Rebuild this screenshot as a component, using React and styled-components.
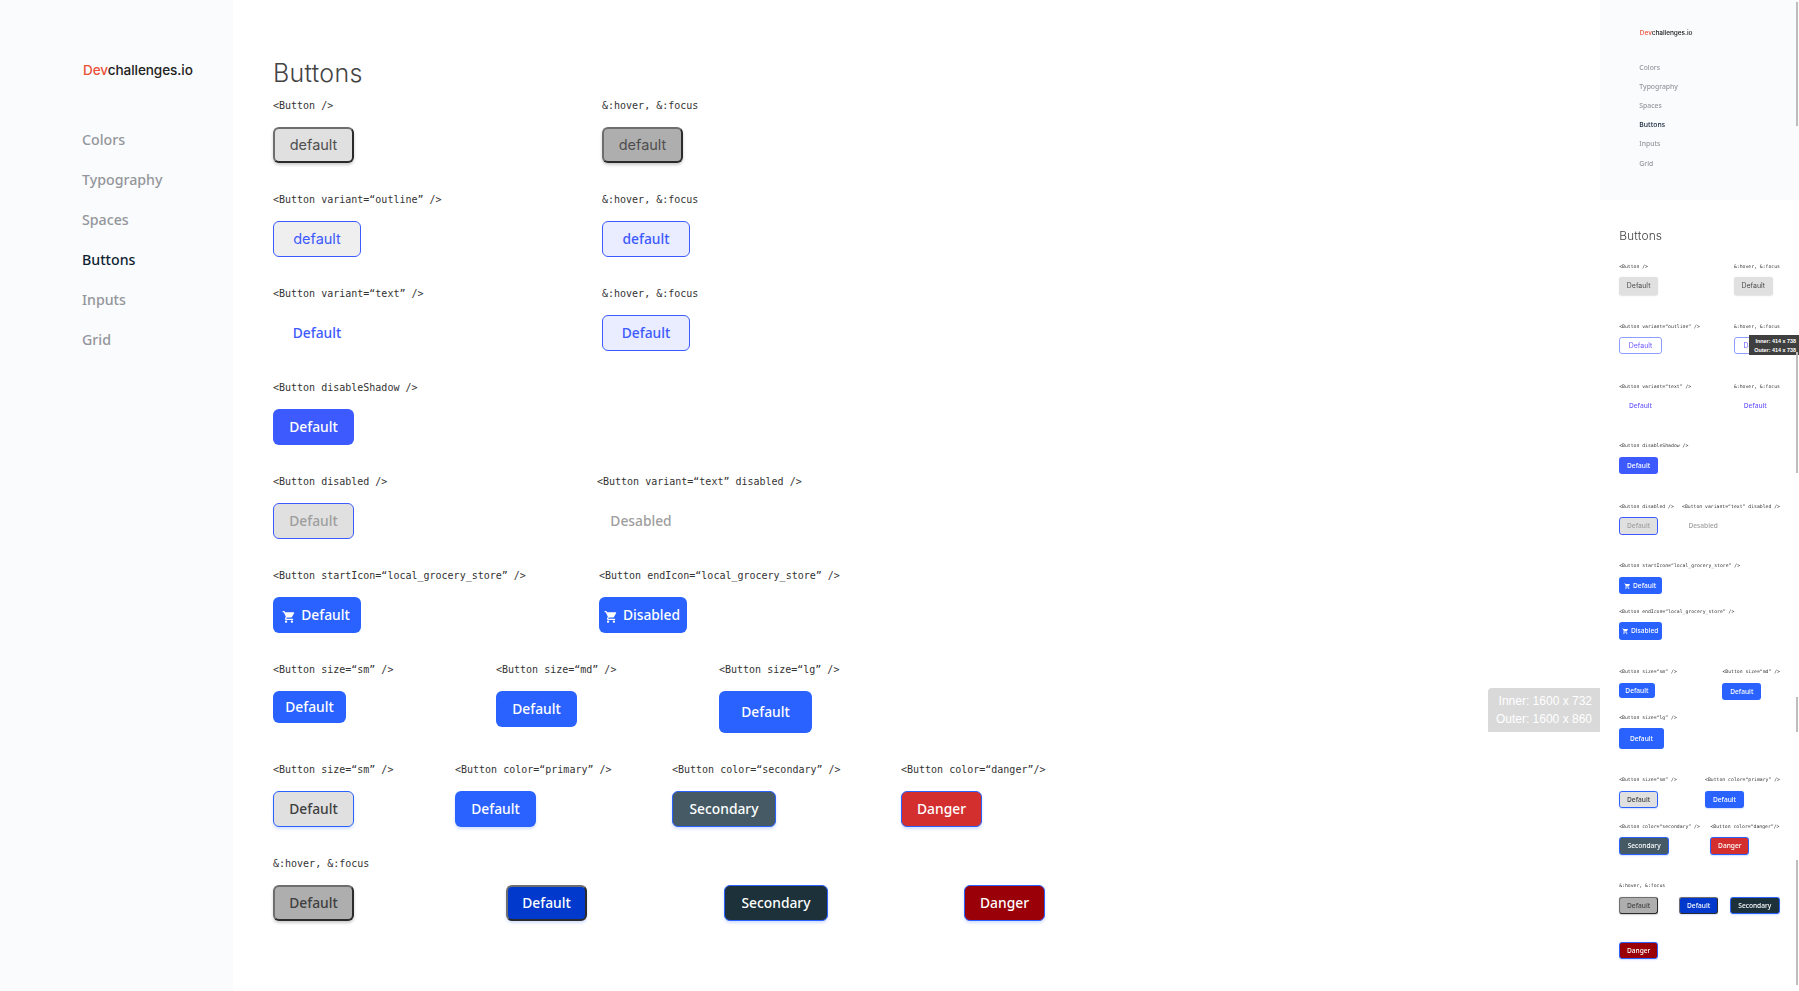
import React from "react";
import styled, { createGlobalStyle, css } from "styled-components";

const Global = createGlobalStyle`
  html, body { margin: 0; padding: 0; background: #fff; height: 100%; overflow: hidden; }
  #root { height: 100%; }
`;

const DISPLAY = `Inter, "Open Sans", sans-serif`;
const BODY = `"Noto Sans", "Open Sans", sans-serif`;
const MONO = `"DejaVu Sans Mono", "Liberation Mono", monospace`;

const Page = styled.div`
  display: flex;
  height: 991px;
  width: 1799px;
`;
const Side = styled.aside`
  flex: none;
  width: ${(p) => p.$w};
  height: ${(p) => p.$h};
  background: #fafbfd;
  box-sizing: border-box;
  padding: 60px 0 0 82px;
`;
const Logo = styled.div`
  font: 500 13.6px/20px ${DISPLAY};
  color: #222;
  letter-spacing: -0.1px;
  margin-left: 1px;
  margin-bottom: 40px;
  span { color: #eb5038; }
`;
const NavItem = styled.div`
  font: 500 14.2px/40px ${BODY};
  color: ${(p) => (p.$active ? "#0f1f33" : "#94969b")};
`;
const Main = styled.main`
  flex: 1;
  padding-left: 40px;
`;
const Heading = styled.h1`
  margin: 0;
  padding-top: 55px;
  margin-bottom: ${(p) => p.$mb}px;
  font: 300 25px/36px ${DISPLAY};
  letter-spacing: 0.3px;
  color: #444;
`;
const Row = styled.div`
  display: flex;
  margin-bottom: ${(p) => p.$mb}px;
`;
const Cell = styled.div`
  flex: none;
  width: ${(p) => p.$w}px;
  display: flex;
  flex-direction: column;
  align-items: flex-start;
  gap: 14px;
`;
const Label = styled.code`
  display: block;
  height: 16px;
  font: 400 10px/18px ${MONO};
  color: #333;
  white-space: pre;
`;

const OUTSET = css`border: 2px solid; border-color: #6e6e6e #2b2b2b #2b2b2b #6e6e6e;`;
const BLUE_EDGE = css`border: 1px solid #2962ff; box-shadow: 0 2px 3px rgba(41,98,255,.2);`;
const THIN = css`font: 400 14.5px/20px ${DISPLAY};`;

const looks = {
  plain: css`background: #e0e0e0; color: #4f4f4f; ${OUTSET} box-shadow: 0 2px 3px rgba(51,51,51,.25); ${THIN}`,
  plainHover: css`background: #aeaeae; color: #4f4f4f; ${OUTSET} box-shadow: 0 2px 3px rgba(51,51,51,.25); ${THIN}`,
  outline: css`background: #efefef; color: #3d5afe; border: 1px solid #3d5afe; ${THIN}`,
  outlineHover: css`background: #e9edff; color: #3d5afe; border: 1px solid #3d5afe;`,
  text: css`background: transparent; color: #3d5afe;`,
  flat: css`background: #3d5afe; color: #fff;`,
  disabled: css`background: #e0e0e0; color: #9e9e9e; border: 1px solid #3d5afe;`,
  textDisabled: css`background: transparent; color: #9e9e9e;`,
  blue: css`background: #2962ff; color: #fff;`,
  grey: css`background: #e0e0e0; color: #3f3f3f; ${BLUE_EDGE}`,
  primary: css`background: #2962ff; color: #fff; box-shadow: 0 2px 3px rgba(41,98,255,.2);`,
  secondary: css`background: #455a64; color: #fff; ${BLUE_EDGE}`,
  danger: css`background: #d32f2f; color: #fff; ${BLUE_EDGE}`,
  greyHover: css`background: #aeaeae; color: #3f3f3f; ${OUTSET} box-shadow: 0 2px 3px rgba(51,51,51,.25);`,
  primaryHover: css`background: #0039cb; color: #fff; ${OUTSET} box-shadow: 0 2px 3px rgba(41,98,255,.2);`,
  secondaryHover: css`background: #1c313a; color: #fff; ${BLUE_EDGE}`,
  dangerHover: css`background: #9a0007; color: #fff; ${BLUE_EDGE}`,
  miniPlain: css`background: #e0e0e0; color: #4f4f4f; box-shadow: 0 2px 3px rgba(51,51,51,.15); ${THIN}`,
  miniOutline: css`background: #fff; color: #6d5cff; border: 2px solid #8c9eff; ${THIN}`,
  miniText: css`background: transparent; color: #6d5cff;`,
};

const Btn = styled.button`
  flex: none;
  box-sizing: border-box;
  width: ${(p) => p.$w ?? 81}px;
  height: ${(p) => p.$h ?? 36}px;
  display: inline-flex;
  align-items: center;
  justify-content: center;
  gap: 5px;
  padding: 0;
  border: 0;
  border-radius: 6px;
  font: 500 13.8px/20px ${BODY};
  ${(p) => looks[p.$look]}
`;
const Cart = styled.svg`
  width: 14px;
  height: 14px;
  fill: currentColor;
  margin-top: 3px;
  margin-left: -2px;
`;
const CartIcon = () => (
  <Cart viewBox="0 0 24 24" aria-hidden="true">
    <path d="M7 18c-1.1 0-1.99.9-1.99 2S5.9 22 7 22s2-.9 2-2-.9-2-2-2zM1 2v2h2l3.6 7.59-1.35 2.45c-.16.28-.25.61-.25.96 0 1.1.9 2 2 2h12v-2H7.42c-.14 0-.25-.11-.25-.25l.03-.12.9-1.83h7.45c.75 0 1.41-.41 1.75-1.03l3.58-6.49c.08-.14.12-.31.12-.48 0-.55-.45-1-1-1H5.21l-.94-2H1zm16 16c-1.1 0-1.99.9-1.99 2s.89 2 1.99 2 2-.9 2-2-.9-2-2-2z" />
  </Cart>
);

const Preview = styled.div`
  flex: none;
  width: 199px;
  position: relative;
`;
const PreviewClip = styled.div`
  height: 991px;
  overflow: hidden;
  filter: blur(0.5px);
`;
const PreviewPage = styled.div`
  zoom: 0.48;
  width: 414px;
`;
const PreviewMain = styled.div`
  padding-left: 40px;
`;
const SizeNote = styled.div`
  position: absolute;
  right: 100%;
  top: 688px;
  width: 112px;
  height: 44px;
  box-sizing: border-box;
  padding: 4px 8px 0 0;
  background: #d9d9d9;
  border-top-left-radius: 4px;
  color: #fff;
  font: 400 12px/18px "Liberation Sans", Arial, sans-serif;
  text-align: right;
  white-space: nowrap;
`;
const MiniNote = styled.div`
  position: absolute;
  right: 0;
  top: 335px;
  width: 50px;
  height: 20px;
  background: #3f3f3f;
  color: #fff;
  font: 700 5.4px/8.5px "Liberation Sans", Arial, sans-serif;
  text-align: right;
  padding: 2px 3px 0 0;
  box-sizing: border-box;
  white-space: nowrap;
`;
const Thumb = styled.div`
  position: absolute;
  left: 196px;
  top: ${(p) => p.$top}px;
  width: 2px;
  height: ${(p) => p.$len}px;
  background: #bdbdbd;
`;

const NAV = ["Colors", "Typography", "Spaces", "Buttons", "Inputs", "Grid"];
const Sidebar = ({ w, h }) => (
  <Side $w={w} $h={h}>
    <Logo><span>Dev</span>challenges.io</Logo>
    {NAV.map((n) => <NavItem key={n} $active={n === "Buttons"}>{n}</NavItem>)}
  </Side>
);

const CODE = {
  base: "<Button />",
  hov: "&:hover, &:focus",
  outline: "<Button variant=“outline” />",
  text: "<Button variant=“text” />",
  shadow: "<Button disableShadow />",
  dis: "<Button disabled />",
  textDis: "<Button variant=“text” disabled />",
  start: "<Button startIcon=“local_grocery_store” />",
  end: "<Button endIcon=“local_grocery_store” />",
  sm: "<Button size=“sm” />",
  md: "<Button size=“md” />",
  lg: "<Button size=“lg” />",
  pri: "<Button color=“primary” />",
  sec: "<Button color=“secondary” />",
  dan: "<Button color=“danger”/>",
};

const Rows = ({ rows }) =>
  rows.map((r, i) => (
    <Row key={i} $mb={r.mb}>
      {r.cells.map((c, j) => (
        <Cell key={j} $w={c.cw}>
          <Label>{c.code}</Label>
          <Btn $look={c.look} $w={c.w} $h={c.h}>
            {c.icon && <CartIcon />}
            {c.t}
          </Btn>
        </Cell>
      ))}
    </Row>
  ));

const DESK = [
  { mb: 28, cells: [
    { cw: 329, code: CODE.base, look: "plain", w: 81, t: "default" },
    { cw: 329, code: CODE.hov, look: "plainHover", w: 81, t: "default" } ] },
  { mb: 28, cells: [
    { cw: 329, code: CODE.outline, look: "outline", w: 88, t: "default" },
    { cw: 329, code: CODE.hov, look: "outlineHover", w: 88, t: "default" } ] },
  { mb: 28, cells: [
    { cw: 329, code: CODE.text, look: "text", w: 88, t: "Default" },
    { cw: 329, code: CODE.hov, look: "outlineHover", w: 88, t: "Default" } ] },
  { mb: 28, cells: [{ cw: 329, code: CODE.shadow, look: "flat", t: "Default" }] },
  { mb: 28, cells: [
    { cw: 324, code: CODE.dis, look: "disabled", t: "Default" },
    { cw: 329, code: CODE.textDis, look: "textDisabled", w: 88, t: "Desabled" } ] },
  { mb: 28, cells: [
    { cw: 326, code: CODE.start, look: "blue", w: 88, t: "Default", icon: true },
    { cw: 329, code: CODE.end, look: "blue", w: 88, t: "Disabled", icon: true } ] },
  { mb: 28, cells: [
    { cw: 223, code: CODE.sm, look: "blue", w: 73, h: 32, t: "Default" },
    { cw: 223, code: CODE.md, look: "blue", t: "Default" },
    { cw: 223, code: CODE.lg, look: "blue", w: 93, h: 42, t: "Default" } ] },
  { mb: 28, cells: [
    { cw: 182, code: CODE.sm, look: "grey", t: "Default" },
    { cw: 217, code: CODE.pri, look: "primary", t: "Default" },
    { cw: 229, code: CODE.sec, look: "secondary", w: 104, t: "Secondary" },
    { cw: 200, code: CODE.dan, look: "danger", t: "Danger" } ] },
  { mb: 0, cells: [
    { cw: 233, code: CODE.hov, look: "greyHover", t: "Default" },
    { cw: 218, code: "", look: "primaryHover", t: "Default" },
    { cw: 240, code: "", look: "secondaryHover", w: 104, t: "Secondary" },
    { cw: 100, code: "", look: "dangerHover", t: "Danger" } ] },
];

const MINI = [
  { mb: 58, cells: [
    { cw: 239, code: CODE.base, look: "miniPlain", t: "Default" },
    { cw: 100, code: CODE.hov, look: "miniPlain", t: "Default" } ] },
  { mb: 60, cells: [
    { cw: 239, code: CODE.outline, look: "miniOutline", w: 89, t: "Default" },
    { cw: 100, code: CODE.hov, look: "miniOutline", w: 89, t: "Default" } ] },
  { mb: 58, cells: [
    { cw: 239, code: CODE.text, look: "miniText", w: 89, t: "Default" },
    { cw: 100, code: CODE.hov, look: "miniText", w: 89, t: "Default" } ] },
  { mb: 60, cells: [{ cw: 239, code: CODE.shadow, look: "flat", t: "Default" }] },
  { mb: 58, cells: [
    { cw: 131, code: CODE.dis, look: "disabled", t: "Default" },
    { cw: 200, code: CODE.textDis, look: "textDisabled", w: 88, t: "Desabled" } ] },
  { mb: 29, cells: [{ cw: 330, code: CODE.start, look: "blue", w: 89, t: "Default", icon: true }] },
  { mb: 60, cells: [{ cw: 330, code: CODE.end, look: "blue", w: 89, t: "Disabled", icon: true }] },
  { mb: 29, cells: [
    { cw: 215, code: CODE.sm, look: "blue", w: 74, h: 32, t: "Default" },
    { cw: 100, code: CODE.md, look: "blue", t: "Default" } ] },
  { mb: 57, cells: [{ cw: 330, code: CODE.lg, look: "blue", w: 93, h: 43, t: "Default" }] },
  { mb: 31, cells: [
    { cw: 179, code: CODE.sm, look: "grey", t: "Default" },
    { cw: 150, code: CODE.pri, look: "primary", t: "Default" } ] },
  { mb: 58, cells: [
    { cw: 190, code: CODE.sec, look: "secondary", w: 104, t: "Secondary" },
    { cw: 140, code: CODE.dan, look: "danger", t: "Danger" } ] },
  { mb: 58, cells: [
    { cw: 125, code: CODE.hov, look: "greyHover", t: "Default" },
    { cw: 106, code: "", look: "primaryHover", t: "Default" },
    { cw: 104, code: "", look: "secondaryHover", w: 103, t: "Secondary" } ] },
];
const LastMini = styled(Btn)`
  display: flex;
`;

export default function App() {
  return (
    <>
      <Global />
      <Page>
        <Sidebar w="233px" h="991px" />
        <Main>
          <Heading $mb={6}>Buttons</Heading>
          <Rows rows={DESK} />
        </Main>
        <Preview>
          <PreviewClip>
            <PreviewPage>
              <Sidebar w="100%" h="417px" />
              <PreviewMain>
                <Heading $mb={40}>Buttons</Heading>
                <Rows rows={MINI} />
                <LastMini $look="dangerHover">Danger</LastMini>
              </PreviewMain>
            </PreviewPage>
          </PreviewClip>
          <SizeNote>Inner: 1600 x 732<br />Outer: 1600 x 860</SizeNote>
          <MiniNote>Inner: 414 x 738<br />Outer: 414 x 738</MiniNote>
          <Thumb $top={2} $len={124} />
          <Thumb $top={352} $len={121} />
          <Thumb $top={697} $len={35} />
          <Thumb $top={860} $len={125} />
        </Preview>
      </Page>
    </>
  );
}
